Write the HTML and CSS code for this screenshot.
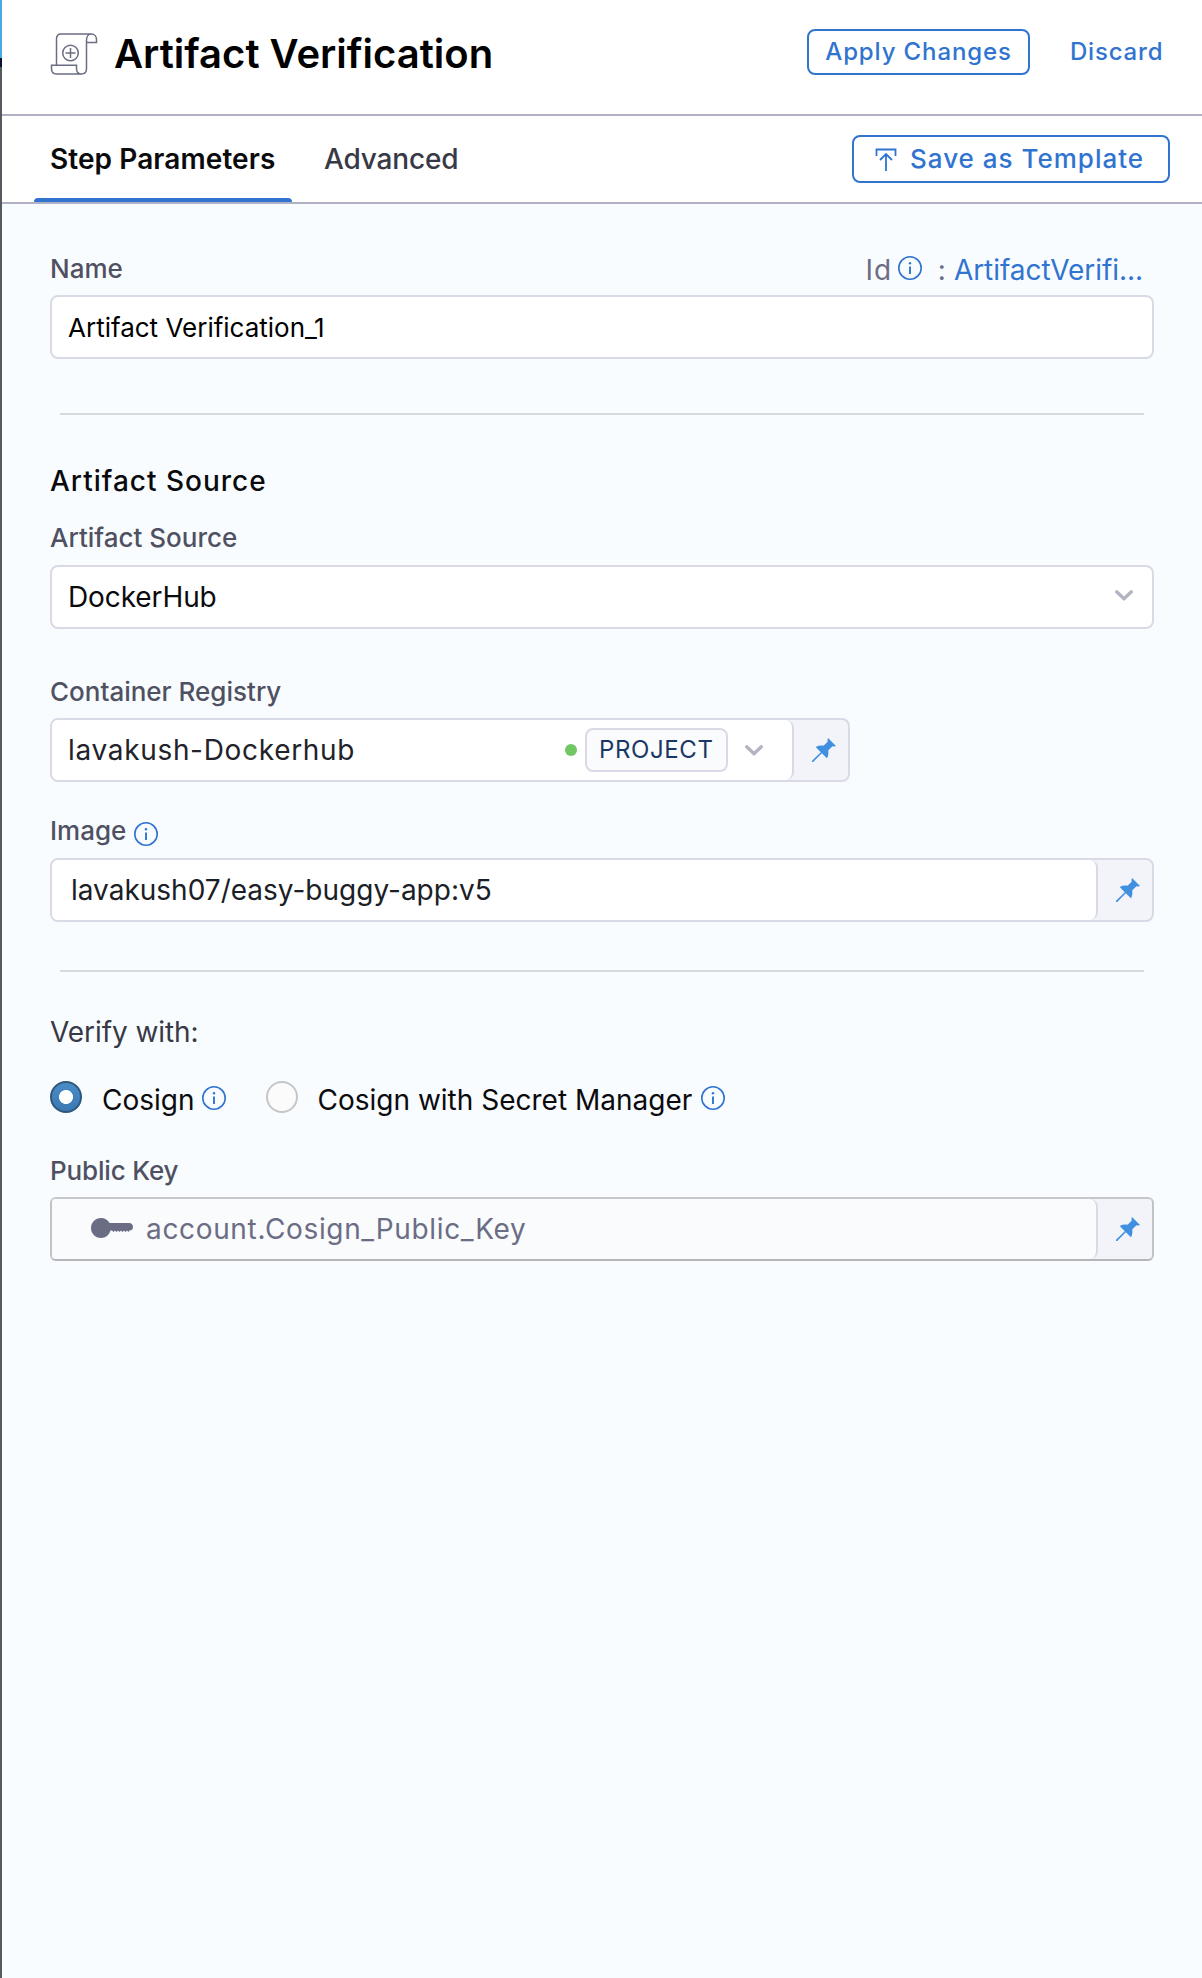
FILE: index.html
```html
<!DOCTYPE html>
<html lang="en">
<head>
<meta charset="utf-8">
<title>Artifact Verification</title>
<link rel="stylesheet" href="styles.css">
</head>
<body>
<svg class="defs" aria-hidden="true">
  <symbol id="info" viewBox="0 0 24 24"><circle cx="12" cy="12" r="11.2" fill="none" stroke="currentColor" stroke-width="1.6"/><path d="M12 10.4V18" stroke="currentColor" stroke-width="1.9"/><circle cx="12" cy="7.2" r="1.2" fill="currentColor"/></symbol>
  <symbol id="pin" viewBox="0 0 24 24"><path d="M16 0L24 8C22.800 8.600 21.400 8.400 20.400 8.200L16.200 12.400C16.700 15.200 16.300 17.800 15 20.300L9.800 15.200L1.200 24L0 24L0 22.800L8.800 14.200L3.700 9C6.200 7.700 8.800 7.300 11.600 7.800L15.800 3.600C15.400 2.400 15.400 1.200 16 0Z" fill="currentColor"/></symbol>
  <symbol id="chevron" viewBox="0 0 18 11"><path d="M1.700 1.800L9 8.700L16.300 1.800" fill="none" stroke="currentColor" stroke-width="3.300" stroke-linecap="round" stroke-linejoin="round"/></symbol>
</svg>
<div class="edge"></div>
<main class="panel">
  <header class="header">
    <svg class="step-icon" viewBox="0 0 48 44" fill="none" stroke="#6b6d85" stroke-width="1.500"><path d="M6.500 33V7C6.500 3.500 8.500 2 11 2H41.500C44.500 2 46.500 4.500 46.500 7.500V10.500H36.500V8C36.500 4.500 38.500 2 41.500 2M36.500 10.500V36.500C36.500 40 34.500 42 31.500 42C28.500 42 26.500 40 26.500 36.500V33.300H1.500V36.500C1.500 40 3.500 42 6.500 42H31.500"/><circle cx="20.500" cy="21" r="7.800"/><path d="M15.500 21h10M20.500 16v10"/></svg>
    <h1 class="title">Artifact Verification</h1>
    <button class="btn apply">Apply Changes</button>
    <button class="discard">Discard</button>
  </header>
  <nav class="tabs">
    <div class="tab active">Step Parameters</div>
    <div class="tab">Advanced</div>
    <button class="btn save"><svg class="save-icon" viewBox="0 0 22 24" fill="none" stroke="currentColor" stroke-width="1.800"><path d="M1.500 9V2.500H20.500V9M11 24V7.500M5 13L11 7L17 13"/></svg>Save as Template</button>
  </nav>
  <section class="form">
    <div class="field-head">
      <label class="label">Name</label>
      <div class="ident"><span class="ident-label">Id</span><svg class="info"><use href="#info"/></svg><span class="colon">:</span><span class="link">ArtifactVerifi...</span></div>
    </div>
    <div class="input"><span class="name-value">Artifact Verification_1</span></div>
    <hr class="rule">
    <h2 class="subhead">Artifact Source</h2>
    <label class="label source-label">Artifact Source</label>
    <div class="input select"><span class="value source-value">DockerHub</span><svg class="chevron"><use href="#chevron"/></svg></div>
    <label class="label registry-label">Container Registry</label>
    <div class="input registry">
      <div class="entry"><span class="value registry-value">lavakush-Dockerhub</span><i class="dot"></i><span class="scope">PROJECT</span><svg class="chevron"><use href="#chevron"/></svg></div>
      <div class="pinbox"><svg class="pin"><use href="#pin"/></svg></div>
    </div>
    <label class="label image-label">Image<svg class="info"><use href="#info"/></svg></label>
    <div class="input">
      <div class="entry"><span class="value image-value">lavakush07/easy-buggy-app:v5</span></div>
      <div class="pinbox"><svg class="pin"><use href="#pin"/></svg></div>
    </div>
    <hr class="rule lower">
    <div class="verify">Verify with:</div>
    <div class="radios">
      <i class="radio checked"></i><span class="choice first">Cosign</span><svg class="info"><use href="#info"/></svg>
      <i class="radio second"></i><span class="choice">Cosign with Secret Manager</span><svg class="info"><use href="#info"/></svg>
    </div>
    <label class="label key-label">Public Key</label>
    <div class="input key">
      <div class="entry"><svg class="key-icon" viewBox="0 0 42 20" fill="currentColor"><path d="M10 0C14 0 17 2 18.600 5H38C40.700 5 42 6.800 42 9C42 11.400 40.500 12.500 38.500 12.500L37.500 14L36 12.500L34.500 14L33 12.500L31.500 14L30 12.500L28.500 14L27 12.500L25.500 14L24 12.500L22.500 14L21 12.500H19.500C18.200 17 14.700 20 10 20C4.300 20 0 15.500 0 10C0 4.500 4.300 0 10 0Z"/></svg><span class="value key-value">account.Cosign_Public_Key</span></div>
      <div class="pinbox"><svg class="pin"><use href="#pin"/></svg></div>
    </div>
  </section>
</main>
</body>
</html>
```
FILE: styles.css
```css
* { box-sizing: border-box; }
body { margin: 0; display: flex; min-height: 1978px; background: #f9fcff; color: #0b0b0d; font-family: Inter, "Liberation Sans", sans-serif; font-size: 28px; line-height: 32px; }
.defs { position: absolute; width: 0; height: 0; }
.edge { flex: 0 0 2px; background: linear-gradient(#48aae4 58px, #0b1533 58px 67px, #555a60 67px); }
.panel { flex: 1; min-width: 0; }
button { font: inherit; padding: 0; border: 0; background: none; color: #3074d0; font-weight: 500; }
.btn { border: 2px solid #3074d0; border-radius: 8px; }

/* Header */
.header { display: flex; align-items: flex-start; height: 116px; padding-left: 48px; background: #fff; border-bottom: 2px solid #b0b1c4; }
.step-icon { width: 48px; height: 44px; margin-top: 32px; }
.title { margin: 30px auto 0 16px; font-size: 40px; line-height: 48px; font-weight: 600; color: #000; white-space: nowrap; }
.apply { width: 223px; height: 46px; margin-top: 29px; font-size: 24px; letter-spacing: .87px; }
.discard { width: 91px; margin: 36px 41px 0 40px; font-size: 24px; line-height: 32px; letter-spacing: .8px; white-space: nowrap; }

/* Tabs */
.tabs { display: flex; height: 88px; background: #fff; border-bottom: 2px solid #b0b1c4; padding-left: 32px; }
.tab { position: relative; padding: 27px 16px 0; margin-right: 16px; font-weight: 500; color: #383946; letter-spacing: -.15px; white-space: nowrap; }
.active { width: 258px; font-weight: 600; color: #0b0b0d; letter-spacing: .08px; }
.active::after { content: ""; position: absolute; left: 0; right: 0; bottom: 0; height: 4px; border-radius: 4px 4px 0 0; background: #3074d0; }
.save { display: flex; align-items: center; width: 318px; height: 48px; margin: 19px 32px 0 auto; padding-left: 21px; font-size: 26px; letter-spacing: 1px; white-space: nowrap; }
.save-icon { width: 22px; height: 24px; margin-right: 13px; }

/* Form */
.form { padding: 49px 48px 0 48px; }
.field-head { display: flex; justify-content: space-between; height: 32px; margin-bottom: 10px; }
.label { display: block; font-size: 26px; font-weight: 500; color: #4f5162; white-space: nowrap; }
.ident { display: flex; align-items: flex-start; padding-top: 1px; margin-right: 11px; color: #6b6d85; }
.ident-label { letter-spacing: .8px; }
.info { width: 24px; height: 24px; color: #3074d0; flex: none; }
.ident .info { margin: 2px 16px 0 6px; }
.colon { margin-right: 8px; }
.link { color: #3074d0; letter-spacing: -.06px; }
.input { display: flex; width: 1104px; height: 64px; border: 2px solid #d9dae5; border-radius: 8px; background: #fff; overflow: hidden; }
.name-value { margin: 15px 0 0 16px; font-size: 26px; color: #000; }
.rule { height: 2px; border: 0; margin: 54px 10px 50px; background: #d5dade; }
.subhead { margin: 0 0 25px; font-size: 28px; line-height: 32px; font-weight: 500; letter-spacing: 1px; }
.source-label { margin-bottom: 11px; }
.value { margin: 14px 0 0 16px; white-space: nowrap; }
.source-value { letter-spacing: -.1px; }
.select { justify-content: space-between; }
.chevron { width: 18px; height: 11px; color: #b3b4c2; flex: none; }
.select .chevron { margin: 23px 19px 0 0; }
.registry-label { margin: 47px 0 10px; }
.registry { width: 800px; }
.registry-value { color: #22222a; letter-spacing: .68px; }
.input:has(.pinbox) { background: #f3f3fa; }
.entry { display: flex; flex: 1; background: #fff; border-right: 2px solid #d9dae5; border-radius: 0 8px 8px 0; }
.pinbox { flex: 0 0 54px; padding: 18px 0 0 18px; }
.pin { display: block; width: 24px; height: 24px; color: #4190e0; }
.dot { width: 12px; height: 12px; margin: 24px 8px 0 auto; border-radius: 50%; background: #72c664; }
.scope { width: 143px; height: 44px; margin: 8px 17px 0 0; padding: 4px 0 0 12px; border: 2px solid #d9dae5; border-radius: 8px; background: #fafbfc; font-size: 24px; color: #1a3766; letter-spacing: .62px; }
.registry .chevron { margin: 25px 29px 0 0; }
.image-label { display: flex; margin: 33px 0 11px; }
.image-label .info { margin: 7px 0 0 8px; }
.image-value { margin-left: 19px; color: #1a2026; }
.lower { margin: 48px 10px 44px; }
.verify { color: #383946; letter-spacing: -.08px; }
.radios { display: flex; margin-top: 33px; height: 32px; white-space: nowrap; }
.radio { width: 32px; height: 32px; border-radius: 50%; border: 2px solid #c5c6c9; background: #fbfbfc; flex: none; }
.checked { border-color: #2f587f; background: radial-gradient(circle, #fff 6.6px, transparent 7.4px), linear-gradient(#4a8bc6, #3b79b3); }
.choice { margin: 3px 9px 0 20px; }
.first { margin-right: 7px; }
.radios .info { margin-top: 5px; }
.second { margin-left: 40px; }
.key-label { margin: 42px 0 10px; letter-spacing: -.16px; }
.key { border-color: #c6c7ca #c2c3c6 #b5b6b9; border-radius: 6px; }
.key .entry { background: #fafbfc; }
.key-icon { width: 42px; height: 20px; margin: 18.5px 0 0 39px; color: #6b6d85; }
.key-value { margin: 14px 0 0 13px; color: #6b6d85; letter-spacing: .66px; }
```
